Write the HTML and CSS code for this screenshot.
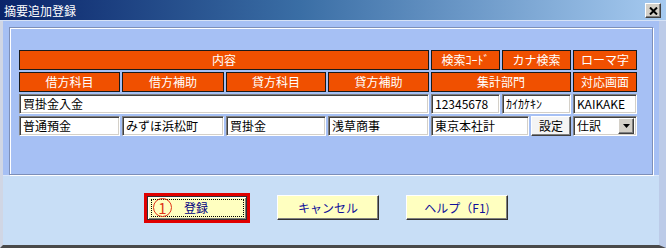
FILE: index.html
```html
<!DOCTYPE html>
<html lang="ja">
<head>
<meta charset="utf-8">
<title>摘要追加登録</title>
<link rel="stylesheet" href="styles.css">
</head>
<body>
<div class="window">
  <div class="titlebar">
    <span class="title">摘要追加登録</span>
    <span class="close"><svg width="9" height="8" viewBox="0 0 9 8"><path d="M1 0.5 L8 7.5 M8 0.5 L1 7.5" stroke="#000" stroke-width="2"/></svg></span>
  </div>
  <div class="body">
    <div class="upper">
      <div class="frame">
        <div class="grid">
          <div class="hd span4">内容</div>
          <div class="hd">検索ｺｰﾄﾞ</div>
          <div class="hd">カナ検索</div>
          <div class="hd">ローマ字</div>

          <div class="hd">借方科目</div>
          <div class="hd">借方補助</div>
          <div class="hd">貸方科目</div>
          <div class="hd">貸方補助</div>
          <div class="hd span2">集計部門</div>
          <div class="hd">対応画面</div>

          <div class="in span4">買掛金入金</div>
          <div class="in">12345678</div>
          <div class="in">ｶｲｶｹｷﾝ</div>
          <div class="in">KAIKAKE</div>

          <div class="in">普通預金</div>
          <div class="in">みずほ浜松町</div>
          <div class="in">買掛金</div>
          <div class="in">浅草商事</div>
          <div class="pair span2">
            <div class="in grow">東京本社計</div>
            <div class="setbtn">設定</div>
          </div>
          <div class="in select">
            <span class="sel-text">仕訳</span>
            <span class="drop"><svg width="7" height="4" viewBox="0 0 7 4"><path d="M0 0h7L3.5 4z" fill="#000"/></svg></span>
          </div>
        </div>
      </div>
    </div>
    <div class="lower">
      <div class="focusring">
        <div class="btn btn-main">
          <div class="dotted">
            <span class="num">1</span>
            <span class="label">登録</span>
          </div>
        </div>
      </div>
      <div class="btn">キャンセル</div>
      <div class="btn">ヘルプ（F1)</div>
    </div>
  </div>
</div>
</body>
</html>
```

FILE: styles.css
```css
html, body {
  margin: 0;
  padding: 0;
  background: #c8def6;
}
body {
  width: 666px;
  height: 248px;
  overflow: hidden;
  font-family: "Noto Sans CJK JP", sans-serif;
  font-size: 12px;
}
.window {
  width: 666px;
  height: 248px;
  display: flex;
  flex-direction: column;
}
.titlebar {
  height: 20px;
  border-bottom: 1px solid #d6e2f6;
  background: linear-gradient(to right, #0a246a 0%, #3a6ea5 45%, #a6caf0 100%);
  display: flex;
  align-items: center;
  justify-content: space-between;
  padding: 0 5px 0 4px;
  flex: none;
}
.title {
  color: #fff;
  font-size: 12px;
  line-height: 20px;
  padding-top: 1px;
}
.close {
  width: 14px;
  height: 13px;
  background: #d4d0c8;
  border-top: 1px solid #fff;
  border-left: 1px solid #fff;
  border-right: 1px solid #404040;
  border-bottom: 1px solid #404040;
  box-shadow: inset -1px -1px 0 #808080;
  display: flex;
  align-items: center;
  justify-content: center;
  margin-top: 1px;
}
.body {
  flex: 1;
  display: flex;
  flex-direction: column;
  border-left: 3px solid #d0d6e4;
  border-right: 7px solid #bccbe8;
  border-bottom: 3px solid #4a4a4a;
}
.upper {
  height: 155px;
  background: #a6c0f4;
  border-bottom: 1px solid #dce8fa;
  padding: 6px 0 0 6px;
  box-sizing: border-box;
  flex: none;
}
.frame {
  width: 644px;
  height: 148px;
  box-sizing: border-box;
  border: 1px solid #7d8fb8;
  box-shadow: inset 1px 1px 0 #ffffff, 1px 1px 0 #ffffff;
  padding: 22px 0 0 9px;
}
.grid {
  display: grid;
  grid-template-columns: 101px 102px 100px 101px 69px 69px 64px;
  grid-template-rows: repeat(4, 20px);
  gap: 2px;
}
.span4 { grid-column: span 4; }
.span2 { grid-column: span 2; }
.hd {
  background: #f05000;
  color: #fff;
  border: 1px solid #1a1a1a;
  box-sizing: border-box;
  display: flex;
  align-items: center;
  justify-content: center;
  line-height: 1;
}
.in {
  background: #fff;
  color: #000;
  box-sizing: border-box;
  border-top: 1px solid #808080;
  border-left: 1px solid #808080;
  border-right: 1px solid #ffffff;
  border-bottom: 1px solid #ffffff;
  box-shadow: inset 1px 1px 0 #404040, inset -1px -1px 0 #d4d0c8;
  padding-left: 3px;
  display: flex;
  align-items: center;
  line-height: 1;
  white-space: nowrap;
  overflow: hidden;
}
.pair {
  display: flex;
  gap: 2px;
}
.grow { flex: 1; }
.setbtn {
  width: 40px;
  box-sizing: border-box;
  background: #f4f4f4;
  border-top: 1px solid #ffffff;
  border-left: 1px solid #ffffff;
  border-right: 1px solid #404040;
  border-bottom: 1px solid #404040;
  box-shadow: inset -1px -1px 0 #808080;
  display: flex;
  align-items: center;
  justify-content: center;
  color: #000;
  line-height: 1;
}
.select {
  justify-content: space-between;
  padding-right: 2px;
}
.drop {
  width: 16px;
  height: 16px;
  box-sizing: border-box;
  background: #d4d0c8;
  border-top: 1px solid #ffffff;
  border-left: 1px solid #ffffff;
  border-right: 1px solid #404040;
  border-bottom: 1px solid #404040;
  box-shadow: inset -1px -1px 0 #808080;
  display: flex;
  align-items: center;
  justify-content: center;
}
.lower {
  flex: 1;
  display: flex;
  align-items: center;
  gap: 27px;
  padding: 10px 0 16px 141px;
  box-sizing: border-box;
}
.focusring {
  width: 106px;
  height: 30px;
  box-sizing: border-box;
  border: 3px solid #e00000;
  display: flex;
}
.btn {
  width: 102px;
  height: 25px;
  box-sizing: border-box;
  background: #ffffc0;
  border-top: 1px solid #ffffff;
  border-left: 1px solid #ffffff;
  border-right: 1px solid #303030;
  border-bottom: 1px solid #303030;
  box-shadow: inset -1px -1px 0 #808080;
  color: #10109a;
  display: flex;
  align-items: center;
  justify-content: center;
  line-height: 1;
}
.btn-main {
  width: 100px;
  height: 24px;
  border-top: 1px solid #303030;
  border-left: 1px solid #303030;
  box-shadow: inset 1px 1px 0 #ffffff, inset -1px -1px 0 #808080;
  padding: 2px 2px 2px 3px;
  align-items: stretch;
  color: #000080;
}
.dotted {
  flex: 1;
  border: 1px dotted #000;
  display: flex;
  align-items: center;
  padding-left: 1px;
}
.num {
  width: 17px;
  height: 17px;
  border: 1.5px solid #e03418;
  border-radius: 50%;
  color: #e03418;
  font-size: 15px;
  display: flex;
  align-items: center;
  justify-content: center;
  line-height: 1;
  flex: none;
}
.label {
  margin-left: 12px;
}
```
